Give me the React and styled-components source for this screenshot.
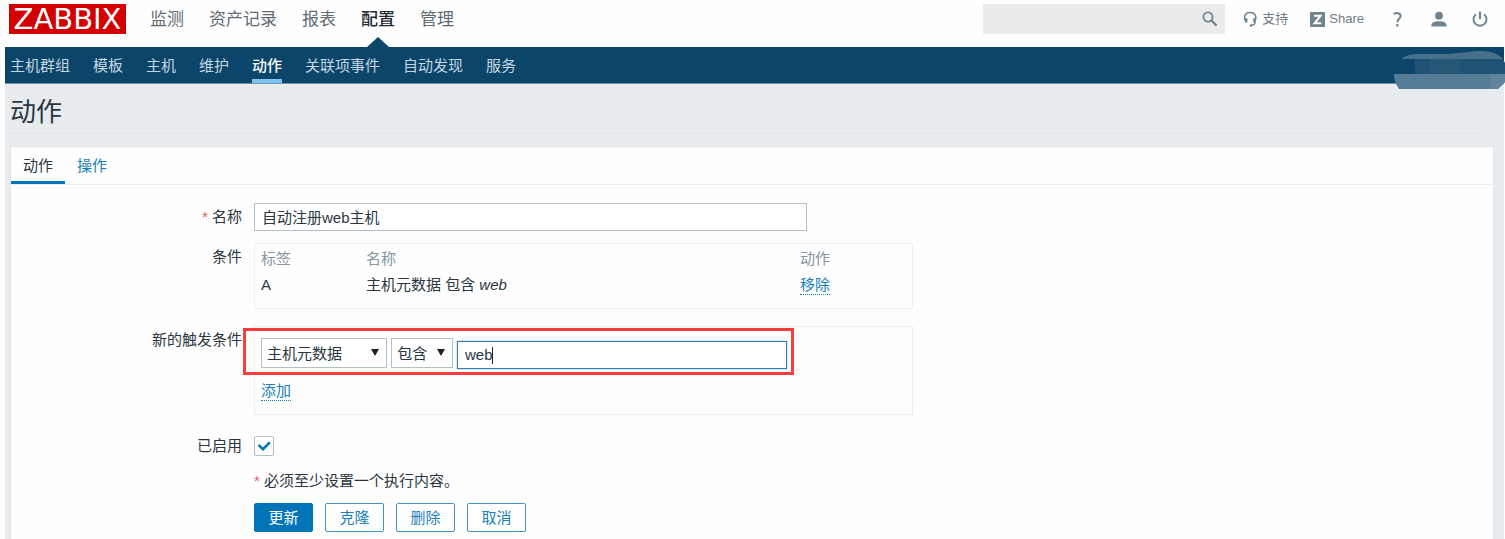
import React from "react";
import styled, { createGlobalStyle, css } from "styled-components";

const GlobalStyle = createGlobalStyle`
  *, *::before, *::after { box-sizing: border-box; }
  body {
    margin: 0;
    background: #fefefe;
    color: #2a373e;
    font: 15px/18px "Liberation Sans", "Noto Sans CJK SC", sans-serif;
  }
  input, select, button { font: inherit; color: inherit; margin: 0; }
  a { text-decoration: none; }
`;

const Page = styled.div`
  min-height: 100vh;
  display: flex;
  flex-direction: column;
  padding: 0 1px 0 5px;
`;

const Header = styled.header`
  display: flex;
  align-items: flex-start;
  height: 47px;
  padding: 4px 16px 0 4px;
`;

const Logo = styled.a`
  width: 117px;
  height: 30px;
  background: #d40000;
  color: #fff;
  font: 29px/30px "DejaVu Sans", sans-serif;
  text-align: center;
`;

const TopNav = styled.nav`
  display: flex;
  gap: 25px;
  margin-left: 24px;
`;

const TopLink = styled.a`
  position: relative;
  height: 43px;
  font-size: 17px;
  line-height: 32px;
  color: ${(p) => (p.$active ? "#1f2c33" : "#5f6c74")};
  font-weight: ${(p) => (p.$active ? 500 : 400)};
  ${(p) =>
    p.$active &&
    css`
      &::after {
        content: "";
        position: absolute;
        left: 50%;
        bottom: 0;
        margin-left: -11px;
        border: 11px solid transparent;
        border-top: 0;
        border-bottom: 10px solid #0b456a;
      }
    `}
`;

const Tools = styled.div`
  display: flex;
  align-items: center;
  height: 30px;
  margin-left: auto;
`;

const Search = styled.form`
  display: flex;
  align-items: center;
  width: 242px;
  height: 30px;
  padding-right: 7px;
  margin-right: 18px;
  background: #ebebeb;
`;

const SearchInput = styled.input`
  flex: 1;
  min-width: 0;
  height: 30px;
  padding: 0 8px;
  border: 0;
  background: transparent;
  outline: 0;
`;

const IconButton = styled.button`
  display: flex;
  padding: 0;
  border: 0;
  background: transparent;
  color: #6f8490;
`;

const ToolLink = styled.a`
  display: flex;
  align-items: center;
  gap: 4px;
  margin-right: ${(p) => p.$gap || 0}px;
  font-size: 13px;
  color: #6f7d85;
`;

const SubNav = styled.nav`
  position: relative;
  display: flex;
  gap: 23px;
  height: 37px;
  padding: 0 5px;
  background: #0b456a;
  border-bottom: 1px solid #6f94ab;
`;

const SubLink = styled.a`
  height: 36px;
  line-height: 38px;
  color: ${(p) => (p.$active ? "#fff" : "#c6d7e2")};
  font-weight: ${(p) => (p.$active ? 500 : 400)};
  box-shadow: ${(p) => (p.$active ? "inset 0 -4px #7cc4f4" : "none")};
`;

const Smudge = styled.svg`
  position: absolute;
  right: -1px;
  top: 4px;
`;

const Main = styled.main`
  flex: 1;
  display: flex;
  flex-direction: column;
  padding: 0 10px 0 5px;
  background: #e8ecef;
`;

const Title = styled.h1`
  margin: 0 10px 12px 0;
  height: 50px;
  border-bottom: 1px solid #dfe4e8;
  font-size: 26px;
  font-weight: 400;
  line-height: 56px;
`;

const Panel = styled.section`
  flex: 1;
  padding-bottom: 7px;
  background: #fefefe;
  border: 1px solid #dfe4e7;
  border-bottom: 0;
`;

const Tabs = styled.div`
  display: flex;
  height: 38px;
  border-bottom: 1px solid #ebeef0;
`;

const Tab = styled.button`
  height: 37px;
  padding: 0 12px;
  border: 0;
  background: transparent;
  line-height: 37px;
  color: ${(p) => (p.$active ? "#2a373e" : "#1b7fbb")};
  box-shadow: ${(p) => (p.$active ? "inset 0 -3px #0275b8" : "none")};
`;

const Form = styled.form`
  display: flex;
  flex-direction: column;
  padding-top: 18px;
`;

const Row = styled.div`
  display: grid;
  grid-template-columns: 231px minmax(0, 1fr);
  column-gap: 12px;
  margin-bottom: ${(p) => p.$gap || 0}px;
`;

const Label = styled.label`
  text-align: right;
  line-height: 28px;
`;

const Required = styled.span`
  color: #e45959;
`;

const TextInput = styled.input`
  width: ${(p) => p.$width}px;
  max-width: 100%;
  height: 28px;
  padding: 0 7px 2px;
  background: #fff;
  border: 1px solid ${(p) => (p.$focused ? "#2f7fb0" : "#b4c0c7")};
  outline: 0;
  box-shadow: ${(p) => (p.$focused ? "0 0 1px #2f7fb0" : "none")};
`;

const Box = styled.div`
  width: 659px;
  max-width: 100%;
  height: ${(p) => p.$height}px;
  padding: ${(p) => p.$top}px 6px 0;
  border: 1px solid #edf0f1;
`;

const Table = styled.table`
  width: 100%;
  table-layout: fixed;
  border-collapse: collapse;
  line-height: 18px;
`;

const Th = styled.th`
  width: ${(p) => (p.$width ? `${p.$width}px` : "auto")};
  padding: 0 0 8px;
  font-weight: 400;
  text-align: left;
  color: #8496a0;
`;

const Td = styled.td`
  padding: 0;
  vertical-align: top;
`;

const DottedLink = styled.a`
  display: inline-block;
  height: 19px;
  color: #1b7fbb;
  border-bottom: 1px dotted #1b7fbb;
`;

const ConditionRow = styled.div`
  position: relative;
  display: flex;
  align-items: flex-end;
  gap: 4px;
  width: 526px;
  height: 31px;
  margin-bottom: 13px;
`;

const Highlight = styled.div`
  position: absolute;
  inset: -10px -7px -6px -18px;
  border: 3px solid #ff3c3c;
  pointer-events: none;
`;

const SelectWrap = styled.div`
  position: relative;
  align-self: flex-start;
  width: ${(p) => p.$width}px;

  &::after {
    content: "";
    position: absolute;
    right: 8px;
    top: 11px;
    border: 4px solid transparent;
    border-top: 7px solid #222;
    border-bottom: 0;
    pointer-events: none;
  }
`;

const Select = styled.select`
  appearance: none;
  width: 100%;
  height: 30px;
  padding: 2px 5px 0;
  background: #fff;
  border: 1px solid #b4c0c7;
  border-radius: 0;
`;

const ValueField = styled.div`
  position: relative;
  flex: 1;
  display: flex;
`;

const Caret = styled.span`
  position: absolute;
  left: 35px;
  top: 6px;
  width: 1px;
  height: 17px;
  background: #222;
`;

const CheckWrap = styled.div`
  position: relative;
  width: 20px;
  height: 20px;
  margin-top: 4px;

  svg {
    position: absolute;
    inset: 0;
    pointer-events: none;
  }
`;

const Checkbox = styled.input`
  appearance: none;
  display: block;
  width: 20px;
  height: 20px;
  background: #fff;
  border: 1px solid #b4c0c7;
  border-radius: 2px;
`;

const Note = styled.div`
  grid-column: 2;
`;

const Buttons = styled.div`
  grid-column: 2;
  display: flex;
  gap: 12px;
`;

const Button = styled.button`
  width: 59px;
  height: 29px;
  padding: 0;
  border: 1px solid ${(p) => (p.$primary ? "#0275b8" : "#3f93c6")};
  border-radius: 2px;
  background: ${(p) => (p.$primary ? "#0275b8" : "#fff")};
  color: ${(p) => (p.$primary ? "#fff" : "#1b7fbb")};
`;

const topItems = ["监测", "资产记录", "报表", "配置", "管理"];
const subItems = ["主机群组", "模板", "主机", "维护", "动作", "关联项事件", "自动发现", "服务"];

export default function App() {
  return (
    <>
      <GlobalStyle />
      <Page>
        <Header>
          <Logo href="#">ZABBIX</Logo>
          <TopNav>
            {topItems.map((t) => (
              <TopLink key={t} href="#" $active={t === "配置"}>{t}</TopLink>
            ))}
          </TopNav>
          <Tools>
            <Search>
              <SearchInput aria-label="搜索" />
              <IconButton type="button" aria-label="搜索">
                <svg width="16" height="16" viewBox="0 0 16 16" fill="none" stroke="currentColor" strokeWidth="1.8">
                  <circle cx="6" cy="6" r="4.6" />
                  <path d="M9.3 9.3 14.6 14.6" strokeWidth="2.2" />
                </svg>
              </IconButton>
            </Search>
            <ToolLink href="#" $gap={22}>
              <svg width="15" height="16" viewBox="0 0 15 16" fill="none" stroke="#6f8490">
                <path d="M3.300 11C.4 8 .9 1.500 7.200 1.500S13.800 8 11.200 11" strokeWidth="1.600" />
                <path d="M3.300 7.200v4.300M11.400 7.200v4.300" strokeWidth="2.200" />
                <path d="M12.300 10.500c0 2.500-1.300 3.700-4.300 4" strokeWidth="1.300" />
                <circle cx="8" cy="14.500" r="1.300" fill="#6f8490" stroke="none" />
              </svg>
              支持
            </ToolLink>
            <ToolLink href="#" $gap={29}>
              <svg width="15" height="15" viewBox="0 0 15 15">
                <rect width="15" height="15" rx="1" fill="#6f8490" />
                <path d="M4 3.700h6.500L4.600 11.300H11.300" fill="none" stroke="#fff" strokeWidth="2" />
              </svg>
              Share
            </ToolLink>
            <ToolLink href="#" $gap={29} aria-label="帮助">
              <svg width="9" height="15" viewBox="0 0 9 15" fill="none" stroke="#6f8490" strokeWidth="2">
                <path d="M.8 2C3.300.4 7.600.7 7.600 4 7.600 6.700 4.300 6.800 4.300 10.200" />
                <path d="M4.300 12.200v2.300" strokeWidth="2.300" />
              </svg>
            </ToolLink>
            <ToolLink href="#" $gap={25} aria-label="用户">
              <svg width="16" height="16" viewBox="0 0 16 16" fill="#6f8490">
                <circle cx="8" cy="4.700" r="3.900" />
                <path d="M.4 15.500V14.200c0-2.600 3.600-3.900 7.600-3.900s7.600 1.300 7.600 3.900v1.300z" />
              </svg>
            </ToolLink>
            <ToolLink href="#" aria-label="退出">
              <svg width="16" height="16" viewBox="0 0 16 16" fill="none" stroke="#6f8490" strokeWidth="1.900">
                <path d="M4 3.200a6.500 6.500 0 1 0 8 0" />
                <path d="M8 .5v7.500" strokeWidth="2.200" />
              </svg>
            </ToolLink>
          </Tools>
        </Header>

        <SubNav>
          {subItems.map((t) => (
            <SubLink key={t} href="#" $active={t === "动作"}>{t}</SubLink>
          ))}
          <Smudge width="111" height="38" viewBox="0 0 111 38" aria-hidden="true">
            <path d="M7 8C12 4 18 3 26 3H53C68 2 75 0 88 0c11 0 17 4 21 8z" fill="#467089" />
            <path d="M21 8h88l2 4v11H21z" fill="#1f5374" />
            <path d="M36 8h30v15H36z" fill="#265876" />
            <path d="M0 23h111v8l-7 7H5Q0 31 0 23z" fill="#547c96" />
            <path d="M96 23h15v8l-7 7h-8z" fill="#5f839c" />
          </Smudge>
        </SubNav>

        <Main>
          <Title>动作</Title>
          <Panel>
            <Tabs>
              <Tab type="button" $active>动作</Tab>
              <Tab type="button">操作</Tab>
            </Tabs>
            <Form>
              <Row $gap={12}>
                <Label htmlFor="name"><Required>*</Required> 名称</Label>
                <TextInput id="name" $width={553} defaultValue="自动注册web主机" />
              </Row>
              <Row $gap={17}>
                <Label as="div">条件</Label>
                <Box $height={66} $top={6}>
                  <Table>
                    <thead>
                      <tr>
                        <Th $width={105}>标签</Th>
                        <Th>名称</Th>
                        <Th $width={106}>动作</Th>
                      </tr>
                    </thead>
                    <tbody>
                      <tr>
                        <Td>A</Td>
                        <Td>主机元数据 包含 <em>web</em></Td>
                        <Td><DottedLink href="#">移除</DottedLink></Td>
                      </tr>
                    </tbody>
                  </Table>
                </Box>
              </Row>
              <Row $gap={17}>
                <Label htmlFor="condition">新的触发条件</Label>
                <Box $height={89} $top={11}>
                  <ConditionRow>
                    <SelectWrap $width={127}>
                      <Select id="condition"><option>主机元数据</option></Select>
                    </SelectWrap>
                    <SelectWrap $width={62}>
                      <Select aria-label="运算符"><option>包含</option></Select>
                    </SelectWrap>
                    <ValueField>
                      <TextInput aria-label="值" $width={330} $focused defaultValue="web" />
                      <Caret />
                    </ValueField>
                    <Highlight />
                  </ConditionRow>
                  <DottedLink href="#">添加</DottedLink>
                </Box>
              </Row>
              <Row $gap={12}>
                <Label htmlFor="enabled">已启用</Label>
                <CheckWrap>
                  <Checkbox id="enabled" type="checkbox" defaultChecked />
                  <svg width="20" height="20" viewBox="0 0 20 20" fill="none" stroke="#0275b8" strokeWidth="2.500">
                    <path d="M4.500 8.800 9 13.200 15.800 6.300" />
                  </svg>
                </CheckWrap>
              </Row>
              <Row $gap={13}>
                <Note><Required>*</Required> 必须至少设置一个执行内容。</Note>
              </Row>
              <Row>
                <Buttons>
                  <Button type="button" $primary>更新</Button>
                  <Button type="button">克隆</Button>
                  <Button type="button">删除</Button>
                  <Button type="button">取消</Button>
                </Buttons>
              </Row>
            </Form>
          </Panel>
        </Main>
      </Page>
    </>
  );
}
